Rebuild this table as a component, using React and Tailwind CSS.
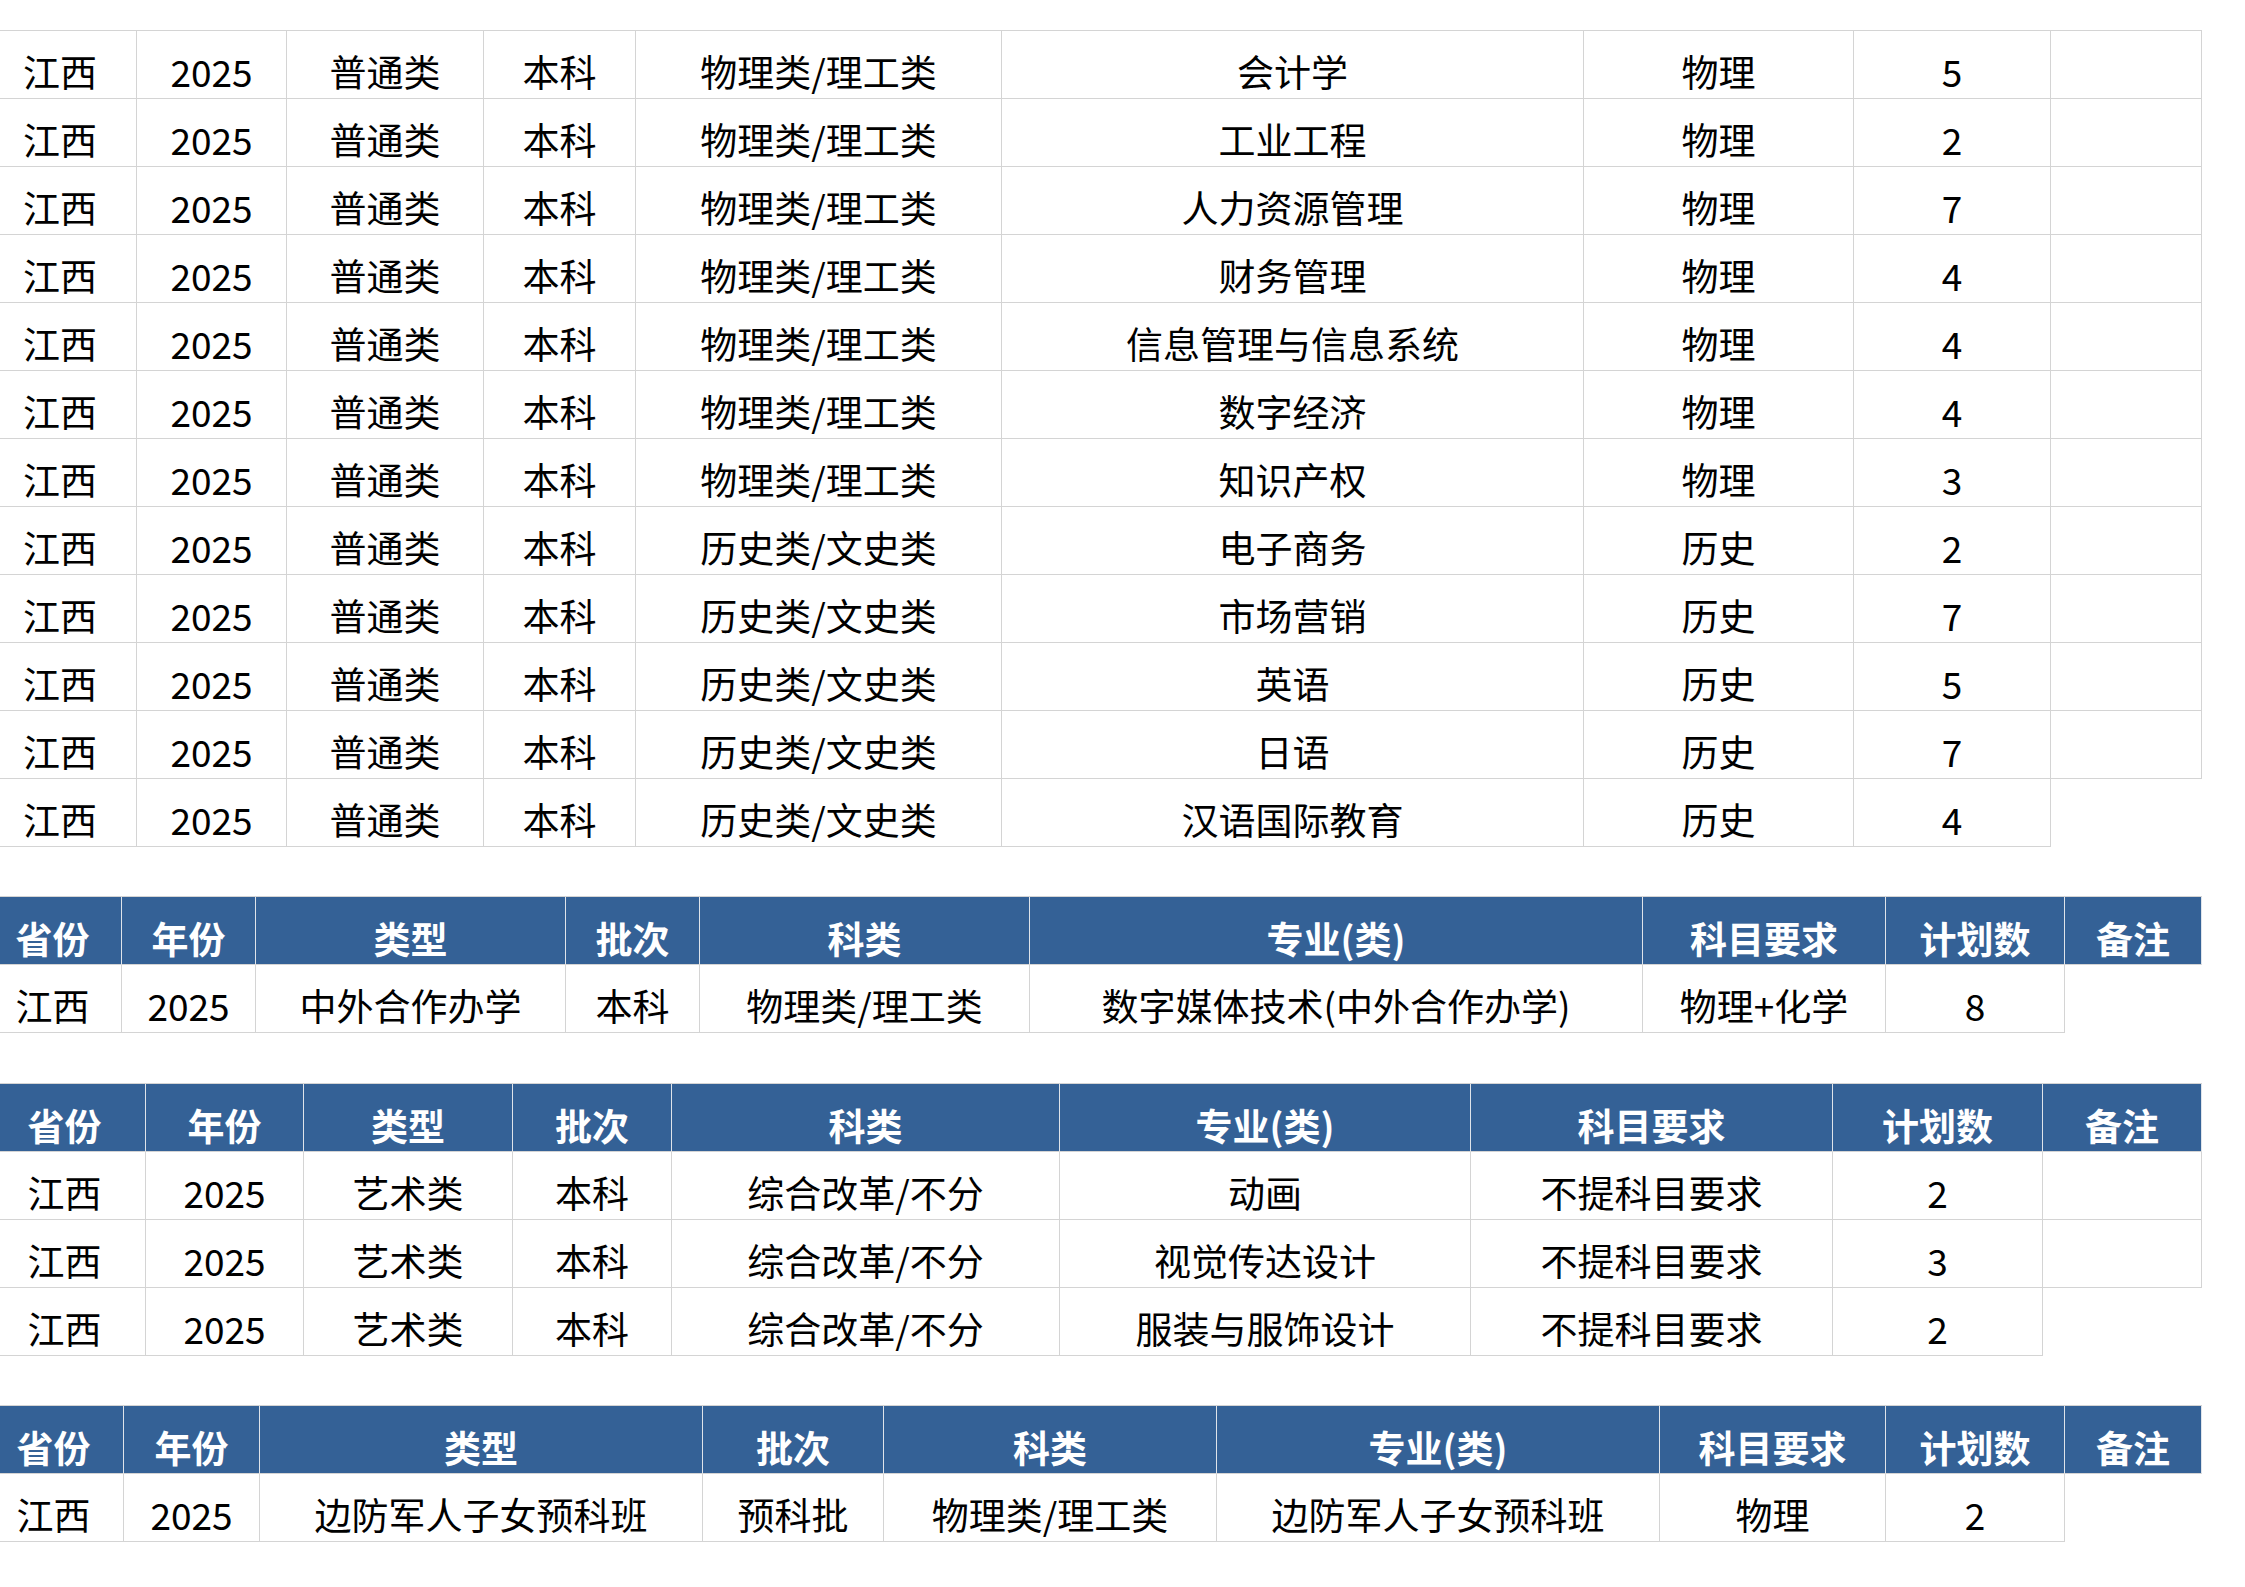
import React from "react";

const headers = ["省份", "年份", "类型", "批次", "科类", "专业(类)", "科目要求", "计划数", "备注"];

// column widths per table (first column runs off the left edge a little)
const tables = [
  {
    header: false,
    cols: ["w-[153px]", "w-[150px]", "w-[197px]", "w-[152px]", "w-[366px]", "w-[582px]", "w-[270px]", "w-[197px]", "w-[151px]"],
    rows: [
      ["江西", "2025", "普通类", "本科", "物理类/理工类", "会计学", "物理", "5"],
      ["江西", "2025", "普通类", "本科", "物理类/理工类", "工业工程", "物理", "2"],
      ["江西", "2025", "普通类", "本科", "物理类/理工类", "人力资源管理", "物理", "7"],
      ["江西", "2025", "普通类", "本科", "物理类/理工类", "财务管理", "物理", "4"],
      ["江西", "2025", "普通类", "本科", "物理类/理工类", "信息管理与信息系统", "物理", "4"],
      ["江西", "2025", "普通类", "本科", "物理类/理工类", "数字经济", "物理", "4"],
      ["江西", "2025", "普通类", "本科", "物理类/理工类", "知识产权", "物理", "3"],
      ["江西", "2025", "普通类", "本科", "历史类/文史类", "电子商务", "历史", "2"],
      ["江西", "2025", "普通类", "本科", "历史类/文史类", "市场营销", "历史", "7"],
      ["江西", "2025", "普通类", "本科", "历史类/文史类", "英语", "历史", "5"],
      ["江西", "2025", "普通类", "本科", "历史类/文史类", "日语", "历史", "7"],
      ["江西", "2025", "普通类", "本科", "历史类/文史类", "汉语国际教育", "历史", "4"],
    ],
    gap: "mt-[30px]",
  },
  {
    header: true,
    cols: ["w-[138px]", "w-[134px]", "w-[310px]", "w-[134px]", "w-[330px]", "w-[613px]", "w-[243px]", "w-[179px]", "w-[137px]"],
    rows: [["江西", "2025", "中外合作办学", "本科", "物理类/理工类", "数字媒体技术(中外合作办学)", "物理+化学", "8"]],
    gap: "mt-[49px]",
  },
  {
    header: true,
    cols: ["w-[162px]", "w-[158px]", "w-[209px]", "w-[159px]", "w-[388px]", "w-[411px]", "w-[362px]", "w-[210px]", "w-[159px]"],
    rows: [
      ["江西", "2025", "艺术类", "本科", "综合改革/不分", "动画", "不提科目要求", "2"],
      ["江西", "2025", "艺术类", "本科", "综合改革/不分", "视觉传达设计", "不提科目要求", "3"],
      ["江西", "2025", "艺术类", "本科", "综合改革/不分", "服装与服饰设计", "不提科目要求", "2"],
    ],
    gap: "mt-[50px]",
  },
  {
    header: true,
    cols: ["w-[140px]", "w-[136px]", "w-[443px]", "w-[181px]", "w-[333px]", "w-[443px]", "w-[226px]", "w-[179px]", "w-[137px]"],
    rows: [["江西", "2025", "边防军人子女预科班", "预科批", "物理类/理工类", "边防军人子女预科班", "物理", "2"]],
    gap: "mt-[49px]",
  },
];

const Sheet = ({ table }) => {
  return (
    <div className={`${table.gap} -ml-[16px] w-fit border-t border-[#d4d4d4]`}>
      {table.header && (
        <div className="flex">
          {headers.map((h, i) => (
            <div
              key={i}
              className={`${table.cols[i]} h-[68px] shrink-0 flex items-end justify-center pb-[3px] bg-[#346196] text-white font-bold border-r border-b border-r-[#dfe4ea] border-b-[#d4d4d4] text-[37px] leading-[46px]`}
            >
              {h}
            </div>
          ))}
        </div>
      )}
      {table.rows.map((row, r) => {
        const last = r === table.rows.length - 1;
        return (
          <div key={r} className="flex">
            {row.map((cell, i) => (
              <div
                key={i}
                className={`${table.cols[i]} h-[68px] shrink-0 flex items-end justify-center pb-[4px] border-r border-b border-[#d4d4d4] text-black text-[37px] leading-[46px]`}
              >
                {cell}
              </div>
            ))}
            {/* 备注 column is empty; last row has no border there */}
            <div
              className={`${table.cols[8]} h-[68px] shrink-0 ${last ? "" : "border-r border-b border-[#d4d4d4]"}`}
            />
          </div>
        );
      })}
    </div>
  );
};

export default function App() {
  return (
    <div
      className="w-[2245px] h-[1587px] bg-white overflow-hidden flex flex-col"
      style={{ fontFamily: '"Noto Sans CJK SC", "Liberation Sans", sans-serif' }}
    >
      {tables.map((t, i) => (
        <Sheet key={i} table={t} />
      ))}
    </div>
  );
}
